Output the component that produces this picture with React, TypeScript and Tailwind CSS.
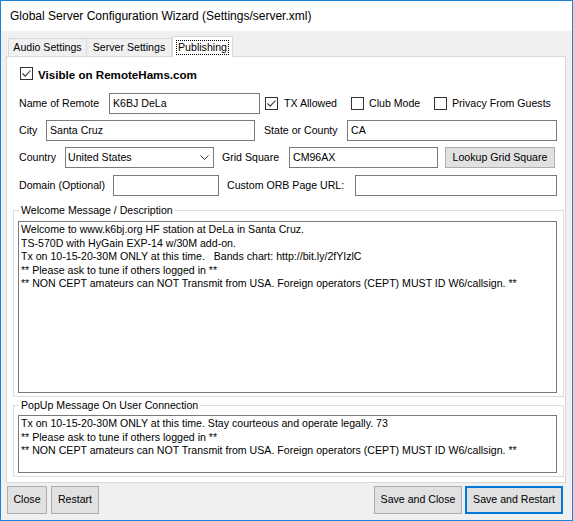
import React from 'react';

const font = { fontFamily: '"Liberation Sans", Arial, sans-serif' };

function CheckBox({ checked }: { checked?: boolean }) {
  return (
    <span className="inline-flex h-[13px] w-[13px] shrink-0 items-center justify-center border border-[#333333] bg-white">
      {checked && (
        <svg width="11" height="11" viewBox="0 0 11 11">
          <path d="M1.5 5.5 L4.2 8.2 L9.5 2.5" fill="none" stroke="#333333" strokeWidth="1.1" />
        </svg>
      )}
    </span>
  );
}

function TextBox({ value, w }: { value?: string; w: string }) {
  return (
    <div className={`${w} h-[21px] shrink-0 border border-[#7a7a7a] bg-white px-[3px] leading-[19px]`}>
      {value}
    </div>
  );
}

function Btn({ children, w, primary }: { children: React.ReactNode; w: string; primary?: boolean }) {
  return (
    <button
      className={`${w} h-[28px] shrink-0 bg-[#e1e1e1] text-[10.6px] text-black ${
        primary ? 'border-2 border-[#0078d7]' : 'border border-[#adadad]'
      }`}
    >
      {children}
    </button>
  );
}

export default function App() {
  const welcome = [
    'Welcome to www.k6bj.org HF station at DeLa in Santa Cruz.',
    'TS-570D with HyGain EXP-14 w/30M add-on.',
    'Tx on 10-15-20-30M ONLY at this time.   Bands chart: http://bit.ly/2fYIzlC',
    '** Please ask to tune if others logged in **',
    '** NON CEPT amateurs can NOT Transmit from USA. Foreign operators (CEPT) MUST ID W6/callsign. **',
  ];
  const popup = [
    'Tx on 10-15-20-30M ONLY at this time. Stay courteous and operate legally. 73',
    '** Please ask to tune if others logged in **',
    '** NON CEPT amateurs can NOT Transmit from USA. Foreign operators (CEPT) MUST ID W6/callsign. **',
  ];

  return (
    <div style={font} className="flex h-[521px] w-[573px] flex-col border border-[#1883d7] bg-[#f0f0f0] text-[10.6px] text-black">
      <div className="flex h-[30px] shrink-0 items-center bg-white pl-[9px] text-[12px]">
        Global Server Configuration Wizard (Settings/server.xml)
      </div>

      <div className="flex flex-col pl-[5px] pt-[5px]">
        {/* tabs */}
        <div className="flex h-[20px] items-end pl-[2px]">
          <div className="flex h-[18px] w-[79px] items-center justify-center border border-b-0 border-[#d9d9d9] bg-[#f0f0f0]">
            Audio Settings
          </div>
          <div className="flex h-[18px] w-[85px] items-center justify-center border border-b-0 border-l-0 border-[#d9d9d9] bg-[#f0f0f0]">
            Server Settings
          </div>
          <div className="relative z-10 -mb-px flex h-[21px] w-[61px] items-center justify-center border border-b-0 border-[#d9d9d9] bg-white">
            <span className="border border-dotted border-black px-[1px] leading-[13px]">Publishing</span>
          </div>
        </div>

        {/* tab page */}
        <div className="flex h-[427px] w-[560px] flex-col border border-[#d9d9d9] bg-white pl-[12px]">
          <div className="mt-[11px] flex h-[14px] items-center">
            <span className="ml-[1px]">
              <CheckBox checked />
            </span>
            <span className="ml-[5px] text-[11.6px] font-bold">Visible on RemoteHams.com</span>
          </div>

          <div className="mt-[11px] flex items-center">
            <span className="w-[90px] shrink-0">Name of Remote</span>
            <TextBox w="w-[151px]" value="K6BJ DeLa" />
            <div className="ml-[5px] flex w-[86px] shrink-0 items-center">
              <CheckBox checked />
              <span className="ml-[6px]">TX Allowed</span>
            </div>
            <div className="flex w-[83px] shrink-0 items-center">
              <CheckBox />
              <span className="ml-[5px]">Club Mode</span>
            </div>
            <div className="flex items-center">
              <CheckBox />
              <span className="ml-[5px]">Privacy From Guests</span>
            </div>
          </div>

          <div className="mt-[6px] flex items-center">
            <span className="w-[27px] shrink-0">City</span>
            <TextBox w="w-[209px]" value="Santa Cruz" />
            <span className="ml-[9px] w-[83px] shrink-0">State or County</span>
            <TextBox w="w-[210px]" value="CA" />
          </div>

          <div className="mt-[6px] flex items-center">
            <span className="w-[46px] shrink-0">Country</span>
            <div className="flex h-[21px] w-[149px] shrink-0 items-center justify-between border border-[#7a7a7a] bg-white pl-[2px] pr-[4px]">
              <span>United States</span>
              <svg width="9" height="6" viewBox="0 0 9 6">
                <path d="M0.5 0.5 L4.5 4.5 L8.5 0.5" fill="none" stroke="#333333" strokeWidth="1" />
              </svg>
            </div>
            <span className="ml-[8px] w-[67px] shrink-0">Grid Square</span>
            <TextBox w="w-[149px]" value="CM96AX" />
            <button className="ml-[7px] h-[21px] w-[110px] shrink-0 border border-[#adadad] bg-[#e1e1e1] text-[10.6px]">
              Lookup Grid Square
            </button>
          </div>

          <div className="mt-[7px] flex items-center">
            <span className="w-[94px] shrink-0">Domain (Optional)</span>
            <TextBox w="w-[106px]" />
            <span className="ml-[8px] w-[128px] shrink-0">Custom ORB Page URL:</span>
            <TextBox w="w-[202px]" />
          </div>

          <fieldset className="ml-[-6px] mt-[7px] w-[551px] border border-[#dcdcdc] px-[4px] pb-[3px]">
            <legend className="ml-[1px] px-[2px] leading-[14px]">Welcome Message / Description</legend>
            <div className="mt-[4px] h-[172px] w-[539px] whitespace-pre border border-[#7a7a7a] px-[2px] pt-[1px] leading-[13.6px]">
              {welcome.join('\n')}
            </div>
          </fieldset>

          <fieldset className="ml-[-6px] mt-[1px] w-[551px] border border-[#dcdcdc] px-[4px] pb-[3px]">
            <legend className="ml-[1px] px-[2px] leading-[14px]">PopUp Message On User Connection</legend>
            <div className="mt-[3px] h-[58px] w-[539px] whitespace-pre border border-[#7a7a7a] px-[2px] pt-[1px] leading-[13.6px]">
              {popup.join('\n')}
            </div>
          </fieldset>
        </div>

        {/* buttons */}
        <div className="mt-[3px] flex items-center pl-[1px] pr-[9px]">
          <Btn w="w-[40px]">Close</Btn>
          <span className="ml-[4px]">
            <Btn w="w-[48px]">Restart</Btn>
          </span>
          <span className="ml-auto">
            <Btn w="w-[88px]">Save and Close</Btn>
          </span>
          <span className="ml-[3px]">
            <Btn w="w-[98px]" primary>
              Save and Restart
            </Btn>
          </span>
        </div>
      </div>
    </div>
  );
}
